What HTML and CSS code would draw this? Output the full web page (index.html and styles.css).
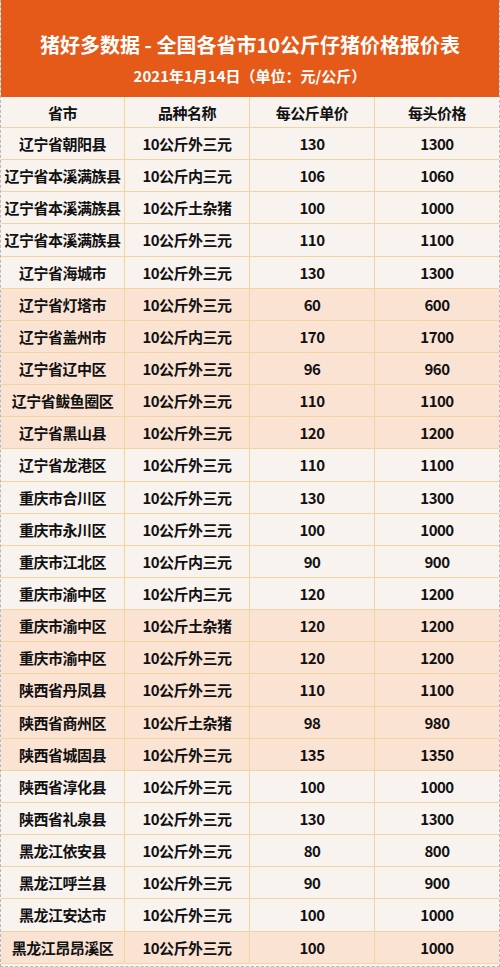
FILE: index.html
```html
<!DOCTYPE html>
<html lang="zh">
<head>
<meta charset="utf-8">
<link rel="stylesheet" href="styles.css">
</head>
<body>
<div class="sheet">
  <header class="banner">
    <h1 class="title">猪好多数据 - 全国各省市10公斤仔猪价格报价表</h1>
    <p class="subtitle">2021年1月14日（单位：元/公斤）</p>
  </header>
  <div class="table">
    <div class="row head"><div>省市</div><div>品种名称</div><div>每公斤单价</div><div>每头价格</div></div>
    <div class="row"><div>辽宁省朝阳县</div><div>10公斤外三元</div><div>130</div><div>1300</div></div>
    <div class="row"><div>辽宁省本溪满族县</div><div>10公斤内三元</div><div>106</div><div>1060</div></div>
    <div class="row"><div>辽宁省本溪满族县</div><div>10公斤土杂猪</div><div>100</div><div>1000</div></div>
    <div class="row"><div>辽宁省本溪满族县</div><div>10公斤外三元</div><div>110</div><div>1100</div></div>
    <div class="row"><div>辽宁省海城市</div><div>10公斤外三元</div><div>130</div><div>1300</div></div>
    <div class="row alt"><div>辽宁省灯塔市</div><div>10公斤外三元</div><div>60</div><div>600</div></div>
    <div class="row alt"><div>辽宁省盖州市</div><div>10公斤内三元</div><div>170</div><div>1700</div></div>
    <div class="row alt"><div>辽宁省辽中区</div><div>10公斤外三元</div><div>96</div><div>960</div></div>
    <div class="row alt"><div>辽宁省鲅鱼圈区</div><div>10公斤外三元</div><div>110</div><div>1100</div></div>
    <div class="row alt"><div>辽宁省黑山县</div><div>10公斤外三元</div><div>120</div><div>1200</div></div>
    <div class="row"><div>辽宁省龙港区</div><div>10公斤外三元</div><div>110</div><div>1100</div></div>
    <div class="row"><div>重庆市合川区</div><div>10公斤外三元</div><div>130</div><div>1300</div></div>
    <div class="row"><div>重庆市永川区</div><div>10公斤外三元</div><div>100</div><div>1000</div></div>
    <div class="row"><div>重庆市江北区</div><div>10公斤内三元</div><div>90</div><div>900</div></div>
    <div class="row"><div>重庆市渝中区</div><div>10公斤内三元</div><div>120</div><div>1200</div></div>
    <div class="row alt"><div>重庆市渝中区</div><div>10公斤土杂猪</div><div>120</div><div>1200</div></div>
    <div class="row alt"><div>重庆市渝中区</div><div>10公斤外三元</div><div>120</div><div>1200</div></div>
    <div class="row alt"><div>陕西省丹凤县</div><div>10公斤外三元</div><div>110</div><div>1100</div></div>
    <div class="row alt"><div>陕西省商州区</div><div>10公斤土杂猪</div><div>98</div><div>980</div></div>
    <div class="row alt"><div>陕西省城固县</div><div>10公斤外三元</div><div>135</div><div>1350</div></div>
    <div class="row"><div>陕西省淳化县</div><div>10公斤外三元</div><div>100</div><div>1000</div></div>
    <div class="row"><div>陕西省礼泉县</div><div>10公斤外三元</div><div>130</div><div>1300</div></div>
    <div class="row"><div>黑龙江依安县</div><div>10公斤外三元</div><div>80</div><div>800</div></div>
    <div class="row"><div>黑龙江呼兰县</div><div>10公斤外三元</div><div>90</div><div>900</div></div>
    <div class="row"><div>黑龙江安达市</div><div>10公斤外三元</div><div>100</div><div>1000</div></div>
    <div class="row alt"><div>黑龙江昂昂溪区</div><div>10公斤外三元</div><div>100</div><div>1000</div></div>
  </div>
</div>
</body>
</html>
```
FILE: styles.css
```css
* { box-sizing: border-box; }
html, body { margin: 0; padding: 0; background: #ffffff; }
body {
  font-family: "Noto Sans CJK SC", "Noto Sans", "DejaVu Sans", sans-serif;
  color: #111111;
}
.sheet {
  width: 500px;
  height: 967px;
  border-left: 1px dashed #b8b8b8;
  border-right: 1px dashed #b8b8b8;
  border-bottom: 1px dashed #b8b8b8;
  background: #f9f3ef;
  overflow: hidden;
}
.banner {
  height: 97px;
  background: #e65a19;
  color: #ffffff;
  text-align: center;
  padding-top: 31px;
}
.title {
  margin: 0;
  font-size: 20px;
  line-height: 28px;
  font-weight: 700;
}
.subtitle {
  margin: 6px 0 0;
  font-size: 15px;
  line-height: 22px;
  font-weight: 700;
}
.table {
  display: flex;
  flex-direction: column;
}
.row {
  display: grid;
  grid-template-columns: 124px 125px 125px 124px;
  height: 32.15px;
  background: #f9f3ef;
  border-bottom: 1px solid #f4d39c;
}
.row.head { height: 31px; background: #f8f3ef; }
.row.alt { background: #fbe3d4; }
.row > div {
  display: flex;
  align-items: center;
  justify-content: center;
  font-size: 15px;
  font-weight: 700;
  white-space: nowrap;
  letter-spacing: -0.5px;
  border-right: 1px solid #f4d39c;
}
.row > div:last-child { border-right: none; }
```
